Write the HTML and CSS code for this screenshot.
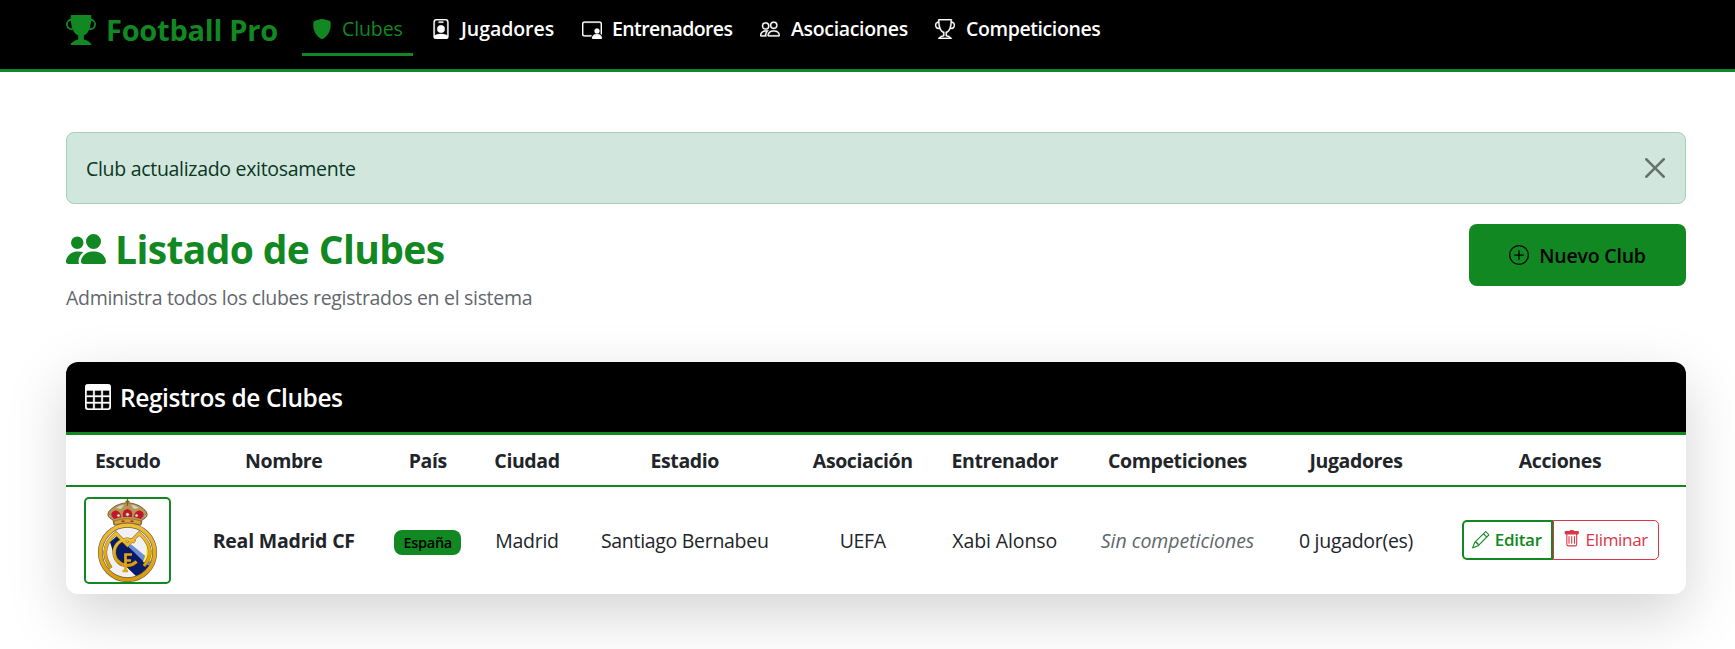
FILE: index.html
```
<!DOCTYPE html>
<html lang="es">
<head>
<meta charset="utf-8">
<title>Football Pro</title>
<link rel="stylesheet" href="styles.css">
</head>
<body>
<svg class="sprite" aria-hidden="true">
  <symbol id="trophy-fill" viewBox="0 0 16 16"><path d="M2.5.5A.5.5 0 0 1 3 0h10a.5.5 0 0 1 .5.5q0 .807-.034 1.536a3 3 0 1 1-1.133 5.89c-.79 1.865-1.878 2.777-2.833 3.011v2.173l1.425.356c.194.048.377.135.537.255L13.3 15.1a.5.5 0 0 1-.3.9H3a.5.5 0 0 1-.3-.9l1.838-1.379c.16-.12.343-.207.537-.255L6.5 13.11v-2.173c-.955-.234-2.043-1.146-2.833-3.012a3 3 0 1 1-1.132-5.89A33 33 0 0 1 2.5.5m.099 2.54a2 2 0 0 0 .72 3.935c-.333-1.05-.588-2.346-.72-3.935m10.083 3.935a2 2 0 0 0 .72-3.935c-.133 1.59-.388 2.885-.72 3.935"/></symbol>
  <symbol id="trophy" viewBox="0 0 16 16"><path d="M2.5.5A.5.5 0 0 1 3 0h10a.5.5 0 0 1 .5.5q0 .807-.034 1.536a3 3 0 1 1-1.133 5.89c-.79 1.865-1.878 2.777-2.833 3.011v2.173l1.425.356c.194.048.377.135.537.255L13.3 15.1a.5.5 0 0 1-.3.9H3a.5.5 0 0 1-.3-.9l1.838-1.379c.16-.12.343-.207.537-.255L6.5 13.11v-2.173c-.955-.234-2.043-1.146-2.833-3.012a3 3 0 1 1-1.132-5.89A33 33 0 0 1 2.5.5m.099 2.54a2 2 0 0 0 .72 3.935c-.333-1.05-.588-2.346-.72-3.935m10.083 3.935a2 2 0 0 0 .72-3.935c-.133 1.59-.388 2.885-.72 3.935M3.504 1q.01.775.056 1.469c.13 2.028.457 3.546.87 4.667C5.294 9.48 6.484 10 7 10a.5.5 0 0 1 .5.5v2.61a1 1 0 0 1-.757.97l-1.426.356a.5.5 0 0 0-.179.085L4.5 15h7l-.638-.479a.5.5 0 0 0-.18-.085l-1.425-.356a1 1 0 0 1-.757-.97V10.5A.5.5 0 0 1 9 10c.516 0 1.706-.52 2.57-2.864.413-1.12.74-2.64.87-4.667q.045-.694.056-1.469z"/></symbol>
  <symbol id="shield-fill" viewBox="0 0 16 16"><path d="M5.072.56C6.157.265 7.31 0 8 0s1.843.265 2.928.56c1.11.3 2.229.655 2.887.87a1.54 1.54 0 0 1 1.044 1.262c.596 4.477-.787 7.795-2.465 9.99a11.8 11.8 0 0 1-2.517 2.453 7 7 0 0 1-1.048.625c-.28.132-.581.24-.829.24s-.548-.108-.829-.24a7 7 0 0 1-1.048-.625 11.8 11.8 0 0 1-2.517-2.453C1.928 10.487.545 7.169 1.141 2.692A1.54 1.54 0 0 1 2.185 1.43 63 63 0 0 1 5.072.56"/></symbol>
  <symbol id="person-badge" viewBox="0 0 16 16"><path d="M6.5 2a.5.5 0 0 0 0 1h3a.5.5 0 0 0 0-1zM11 8a3 3 0 1 1-6 0 3 3 0 0 1 6 0"/><path d="M4.5 0A2.5 2.5 0 0 0 2 2.5V14a2 2 0 0 0 2 2h8a2 2 0 0 0 2-2V2.5A2.5 2.5 0 0 0 11.5 0zM3 2.5A1.5 1.5 0 0 1 4.5 1h7A1.5 1.5 0 0 1 13 2.5v10.795a4.2 4.2 0 0 0-.776-.492C11.392 12.387 10.063 12 8 12s-3.392.387-4.224.803a4.2 4.2 0 0 0-.776.492z"/></symbol>
  <symbol id="person-video" viewBox="0 0 16 16"><path d="M14 9.5a2 2 0 1 1-4 0 2 2 0 0 1 4 0m-6 5.7c0 .8.8.8.8.8h6.4s.8 0 .8-.8-.8-3.2-4-3.2-4 2.4-4 3.2"/><path d="M2 2a2 2 0 0 0-2 2v8a2 2 0 0 0 2 2h5.243c.122-.326.295-.668.526-1H2a1 1 0 0 1-1-1V4a1 1 0 0 1 1-1h12a1 1 0 0 1 1 1v7.81c.353.23.656.496.91.783Q16 12.312 16 12V4a2 2 0 0 0-2-2z"/></symbol>
  <symbol id="people" viewBox="0 0 16 16"><path d="M15 14s1 0 1-1-1-4-5-4-5 3-5 4 1 1 1 1zm-7.978-1L7 12.996c.001-.264.167-1.03.76-1.72C8.312 10.629 9.282 10 11 10c1.717 0 2.687.63 3.24 1.276.593.69.758 1.457.76 1.72l-.008.002-.014.002zM11 7a2 2 0 1 0 0-4 2 2 0 0 0 0 4m3-2a3 3 0 1 1-6 0 3 3 0 0 1 6 0M6.936 9.28a6 6 0 0 0-1.23-.247A7 7 0 0 0 5 9c-4 0-5 3-5 4q0 1 1 1h4.216A2.24 2.24 0 0 1 5 13c0-1.01.377-2.042 1.09-2.904.243-.294.526-.569.846-.816M4.92 10A5.5 5.5 0 0 0 4 13H1c0-.26.164-1.03.76-1.724.545-.636 1.492-1.256 3.16-1.275ZM1.5 5.5a3 3 0 1 1 6 0 3 3 0 0 1-6 0m3-2a2 2 0 1 0 0 4 2 2 0 0 0 0-4"/></symbol>
  <symbol id="people-fill" viewBox="0 0 16 16"><path d="M7 14s-1 0-1-1 1-4 5-4 5 3 5 4-1 1-1 1zm4-6a3 3 0 1 0 0-6 3 3 0 0 0 0 6m-5.784 6A2.24 2.24 0 0 1 5 13c0-1.355.68-2.75 1.936-3.72A6.3 6.3 0 0 0 5 9c-4 0-5 3-5 4s1 1 1 1zM4.5 8a2.5 2.5 0 1 0 0-5 2.5 2.5 0 0 0 0 5"/></symbol>
  <symbol id="plus-circle" viewBox="0 0 16 16"><path d="M8 15A7 7 0 1 1 8 1a7 7 0 0 1 0 14m0 1A8 8 0 1 0 8 0a8 8 0 0 0 0 16"/><path d="M8 4a.5.5 0 0 1 .5.5v3h3a.5.5 0 0 1 0 1h-3v3a.5.5 0 0 1-1 0v-3h-3a.5.5 0 0 1 0-1h3v-3A.5.5 0 0 1 8 4"/></symbol>
  <symbol id="table" viewBox="0 0 16 16"><path d="M0 2a2 2 0 0 1 2-2h12a2 2 0 0 1 2 2v12a2 2 0 0 1-2 2H2a2 2 0 0 1-2-2zm15 2h-4v3h4zm0 4h-4v3h4zm0 4h-4v3h3a1 1 0 0 0 1-1zm-5 3v-3H6v3zm-5 0v-3H1v2a1 1 0 0 0 1 1zm-4-4h4V8H1zm0-4h4V4H1zm5-3v3h4V4zm4 4H6v3h4z"/></symbol>
  <symbol id="pencil" viewBox="0 0 16 16"><path d="M12.146.146a.5.5 0 0 1 .708 0l3 3a.5.5 0 0 1 0 .708l-10 10a.5.5 0 0 1-.168.11l-5 2a.5.5 0 0 1-.65-.65l2-5a.5.5 0 0 1 .11-.168zM11.207 2.5 13.5 4.793 14.793 3.5 12.5 1.207zm1.586 3L10.5 3.207 4 9.707V10h.5a.5.5 0 0 1 .5.5v.5h.5a.5.5 0 0 1 .5.5v.5h.293zm-9.761 5.175-.106.106-1.528 3.821 3.821-1.528.106-.106A.5.5 0 0 1 5 12.5V12h-.5a.5.5 0 0 1-.5-.5V11h-.5a.5.5 0 0 1-.468-.325"/></symbol>
  <symbol id="trash" viewBox="0 0 16 16"><path d="M5.5 5.5A.5.5 0 0 1 6 6v6a.5.5 0 0 1-1 0V6a.5.5 0 0 1 .5-.5m2.5 0a.5.5 0 0 1 .5.5v6a.5.5 0 0 1-1 0V6a.5.5 0 0 1 .5-.5m3 .5a.5.5 0 0 0-1 0v6a.5.5 0 0 0 1 0z"/><path d="M14.5 3a1 1 0 0 1-1 1H13v9a2 2 0 0 1-2 2H5a2 2 0 0 1-2-2V4h-.500a1 1 0 0 1-1-1V2a1 1 0 0 1 1-1H6a1 1 0 0 1 1-1h2a1 1 0 0 1 1 1h3.500a1 1 0 0 1 1 1zM4 4v9a1 1 0 0 0 1 1h6a1 1 0 0 0 1-1V4z"/></symbol>
  <symbol id="close" viewBox="0 0 16 16"><path d="M.293.293a1 1 0 0 1 1.414 0L8 6.586 14.293.293a1 1 0 1 1 1.414 1.414L9.414 8l6.293 6.293a1 1 0 0 1-1.414 1.414L8 9.414l-6.293 6.293a1 1 0 0 1-1.414-1.414L6.586 8 .293 1.707a1 1 0 0 1 0-1.414"/></symbol>
</svg>

<header class="navbar">
  <a class="brand"><svg class="icon"><use href="#trophy-fill"/></svg><span>Football Pro</span></a>
  <nav class="nav">
    <a class="nav-link active"><svg class="icon"><use href="#shield-fill"/></svg><span>Clubes</span></a>
    <a class="nav-link players"><svg class="icon"><use href="#person-badge"/></svg><span>Jugadores</span></a>
    <a class="nav-link coaches"><svg class="icon"><use href="#person-video"/></svg><span>Entrenadores</span></a>
    <a class="nav-link unions"><svg class="icon"><use href="#people"/></svg><span>Asociaciones</span></a>
    <a class="nav-link cups"><svg class="icon"><use href="#trophy"/></svg><span>Competiciones</span></a>
  </nav>
</header>

<main class="container">
  <div class="alert"><span>Club actualizado exitosamente</span><button class="close" aria-label="Cerrar"><svg class="icon"><use href="#close"/></svg></button></div>

  <div class="page-head">
    <div>
      <h1 class="title"><svg class="icon"><use href="#people-fill"/></svg><span>Listado de Clubes</span></h1>
      <p class="subtitle">Administra todos los clubes registrados en el sistema</p>
    </div>
    <a class="btn-new"><svg class="icon"><use href="#plus-circle"/></svg><span>Nuevo Club</span></a>
  </div>

  <section class="card">
    <h2 class="card-header"><svg class="icon"><use href="#table"/></svg><span>Registros de Clubes</span></h2>
    <table class="table">
      <colgroup><col class="c1"><col class="c2"><col class="c3"><col class="c4"><col class="c5"><col class="c6"><col class="c7"><col class="c8"><col class="c9"><col class="c10"></colgroup>
      <thead><tr><th>Escudo</th><th>Nombre</th><th>País</th><th>Ciudad</th><th>Estadio</th><th>Asociación</th><th>Entrenador</th><th>Competiciones</th><th>Jugadores</th><th>Acciones</th></tr></thead>
      <tbody><tr>
        <td><div class="crest">
          <svg viewBox="0 0 83 83">
            <defs>
              <clipPath id="disc"><circle cx="41.500" cy="53.500" r="25.500"/></clipPath>
              <linearGradient id="gold" x1="0" y1="0" x2="0" y2="1"><stop offset="0" stop-color="#f0bd35"/><stop offset="1" stop-color="#dc9a04"/></linearGradient>
            </defs>
            <path d="M28 26L27 21Q20 18 22.500 13Q28 5 41.500 3.500Q55 5 60.500 13Q63 18 56 21L55 26Z" fill="#b9964f" stroke="#5f4d35" stroke-width=".8"/>
            <path d="M28 20Q22 14 29 11.500Q34 11 35.500 18ZM37 18Q35.500 11 41.500 10Q47.500 11 46 18ZM47.500 18Q49 11 54 11.500Q61 14 55 20Z" fill="#c3142f"/>
            <path d="M30 9Q34 5.500 38 6L35 10ZM45 6Q49 5.500 53 9L48 10Z" fill="#d3d0cc"/>
            <path d="M41.500 0V7M39.500 2.500H43.500" stroke="#806120" stroke-width="1.300"/>
            <path d="M28 22Q41.500 17.500 55 22L54.500 26Q41.500 21.500 28.500 26Z" fill="#dba52b" stroke="#735a30" stroke-width=".6"/>
            <path d="M35.500 22.300H38.500M44.500 22.300H47.500" stroke="#b5203a" stroke-width="1.500"/>
            <g fill="#eee2c2" stroke="#73582c" stroke-width=".6"><circle cx="32.500" cy="16.500" r="1.600"/><circle cx="41.500" cy="15.500" r="1.800"/><circle cx="50.500" cy="16.500" r="1.600"/><circle cx="24" cy="17" r="1.200"/><circle cx="59" cy="17" r="1.200"/></g>
            <circle cx="41.500" cy="53.500" r="26" fill="#f1f1f4"/>
            <g clip-path="url(#disc)">
              <path d="M24 43L31 37L66 69L52 79L28 56Z" fill="#061a66"/>
              <path d="M37 42L46 46L68 64L61 66Z" fill="#6e8dd0"/>
              <path d="M58 38Q68 48 66 60Q62 65 57 63Q63 51 58 38Z" fill="#fff04e"/>
            </g>
            <g fill="none" stroke="#7b651e" stroke-width="3.600">
              <path d="M25 69Q13 52 26 38L30 34.500L41.500 46L53 34.500L57 38Q70 52 58 67"/><path d="M49 43A13 13 0 1 0 50.500 62.500"/>
            </g>
            <g fill="none" stroke="url(#gold)" stroke-width="2.700">
              <path d="M25 69Q13 52 26 38L30 34.500L41.500 46L53 34.500L57 38Q70 52 58 67"/><path d="M49 43A13 13 0 1 0 50.500 62.500"/>
            </g>
            <path d="M39.500 72V55.500H46M39.500 61.500H45M36.500 72H42" fill="none" stroke="#e2a516" stroke-width="2.700"/>
            <circle cx="41.500" cy="53.500" r="27.200" fill="none" stroke="#665e4d" stroke-width="4.800"/>
            <circle cx="41.500" cy="53.500" r="27.200" fill="none" stroke="url(#gold)" stroke-width="3.600"/>
          </svg>
        </div></td>
        <td class="name"><span>Real Madrid CF</span></td>
        <td><span class="badge">España</span></td>
        <td>Madrid</td>
        <td>Santiago Bernabeu</td>
        <td>UEFA</td>
        <td class="coach">Xabi Alonso</td>
        <td class="none">Sin competiciones</td>
        <td>0 jugador(es)</td>
        <td><div class="actions"><a class="btn edit"><svg class="icon"><use href="#pencil"/></svg><span>Editar</span></a><a class="btn delete"><svg class="icon"><use href="#trash"/></svg><span>Eliminar</span></a></div></td>
      </tr></tbody>
    </table>
  </section>
</main>
</body>
</html>
```
FILE: styles.css
```
* { box-sizing: border-box; }
body { margin: 0; height: 649px; overflow: hidden; background: #fff; color: #212529; font: 19.500px/30px "Open Sans", "Noto Sans", sans-serif; letter-spacing: -.3px; }
.sprite { display: none; }
.icon { width: 20px; height: 20px; flex: none; fill: currentColor; display: block; }
span { white-space: nowrap; }

.navbar { height: 72px; background: #000; border-bottom: 3px solid #118822; padding-left: 66px; display: flex; align-items: flex-start; }
.brand { width: 236px; padding-top: 8px; display: flex; gap: 10px; color: #118822; font-size: 29px; font-weight: 700; line-height: 44px; letter-spacing: -.25px; }
.brand .icon { width: 30px; height: 30px; margin-top: 7px; }
.nav { display: flex; gap: 8px; }
.nav-link { height: 56px; width: 111px; padding: 14px 0 0 10px; display: flex; gap: 10px; color: #fff; font-weight: 600; letter-spacing: -.33px; }
.nav-link .icon { margin-top: 5px; stroke: currentColor; stroke-width: .25px; }
.nav-link.active { color: #118822; font-weight: 500; border-bottom: 3px solid #118822; letter-spacing: -.1px; }
.nav-link.active .icon { stroke: none; }
.nav-link.players { width: 143px; letter-spacing: -.05px; }
.nav-link.coaches { width: 170px; letter-spacing: -.6px; }
.nav-link.unions { width: 167px; gap: 11px; }
.nav-link.cups { width: 185px; gap: 11px; letter-spacing: -.4px; }

.container { width: 1620px; margin: 60px 0 0 66px; }
.alert { height: 72px; padding: 0 20px 0 19px; display: flex; align-items: center; justify-content: space-between; background: #d1e7dd; border: 1px solid #a3cfbb; border-radius: 8px; color: #0a3622; }
.alert span { padding-top: 2px; }
.close { border: 0; padding: 0; background: none; color: #000; opacity: .5; }
.page-head { height: 138px; margin-top: 20px; display: flex; justify-content: space-between; align-items: flex-start; }
.title { margin: 0; height: 48px; display: flex; gap: 9px; color: #118822; font-size: 39px; line-height: 50px; font-weight: 700; letter-spacing: -.63px; }
.title .icon { width: 40px; height: 40px; margin-top: 5px; }
.subtitle { margin: 11px 0 0; color: #62676c; }
.btn-new { width: 217px; height: 62px; border-radius: 8px; background: #118822; color: #000; display: flex; align-items: center; justify-content: center; gap: 10px; font-weight: 600; letter-spacing: -.2px; }
.btn-new span { padding-top: 2px; }

.card { height: 232px; border-radius: 12px; background: #fff; overflow: hidden; box-shadow: 0 20px 60px rgba(0, 0, 0, .175); }
.card-header { margin: 0; height: 73px; padding: 0 0 0 19px; display: flex; align-items: center; gap: 9px; background: #000; color: #fff; border-bottom: 3px solid #118822; font-size: 24.500px; font-weight: 600; letter-spacing: -.42px; }
.card-header span { padding-top: 2px; }
.card-header .icon { width: 26px; height: 26px; stroke: currentColor; stroke-width: .2px; }
.table { width: 1620px; table-layout: fixed; border-collapse: separate; border-spacing: 0; text-align: center; }
.c1 { width: 123.500px; } .c2 { width: 188.500px; } .c3 { width: 99.500px; } .c4 { width: 99px; } .c5 { width: 216.500px; }
.c6 { width: 139.500px; } .c7 { width: 144.500px; } .c8 { width: 201px; } .c9 { width: 156px; } .c10 { width: 252px; }
.table th { height: 52px; padding: 2px 0 0; font-weight: 700; border-bottom: 2px solid #118822; letter-spacing: -.4px; }
.table td { height: 107px; padding: 0; white-space: nowrap; }
.crest { width: 87px; height: 87px; margin: 0 auto; border: 2px solid #118822; border-radius: 5px; }
.crest svg { display: block; width: 83px; height: 83px; }
.table .name { font-weight: 700; letter-spacing: -.2px; }
.table .coach { letter-spacing: -.1px; }
.table .none { color: #62676c; font-style: italic; letter-spacing: -.05px; }
.badge { display: inline-block; width: 67px; height: 25px; border-radius: 8px; background: #118822; color: #000; font-size: 14.500px; font-weight: 600; line-height: 25px; vertical-align: middle; }
.actions { display: flex; width: 197px; margin: -1px auto 0; height: 40px; }
.btn { height: 40px; display: flex; align-items: center; justify-content: center; font-size: 17px; }
.edit { width: 91px; gap: 5px; border: 2px solid #118822; border-radius: 5px 0 0 5px; color: #118822; font-weight: 600; }
.delete { width: 106px; gap: 5px; border: 1px solid #dc3545; border-radius: 0 5px 5px 0; color: #dc3545; }
.delete .icon { margin-top: -2px; }
.btn .icon { width: 17.500px; height: 17.500px; }
```
